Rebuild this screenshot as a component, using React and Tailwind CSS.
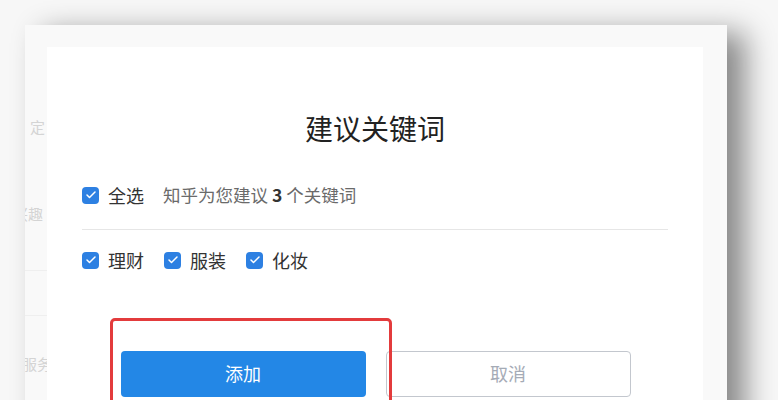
import { Check } from 'lucide-react';

const font = { fontFamily: '"Noto Sans CJK SC", "Noto Sans", sans-serif' };

function Box() {
  return (
    <span className="flex items-center justify-center w-[17px] h-[17px] rounded-[4px] bg-[#2d80e2] shrink-0">
      <Check size={12} strokeWidth={3} className="text-white" />
    </span>
  );
}

function Option({ label }) {
  return (
    <label className="flex items-center gap-[9px] text-[18px] leading-6 text-[#333]">
      <Box />
      <span>{label}</span>
    </label>
  );
}

export default function App() {
  return (
    <div className="w-[778px] h-[400px] overflow-hidden bg-[#f7f7f7] pt-[25px] pl-[25px]" style={font}>
      <div className="flex w-[702px] h-[420px] bg-[#f9f9f9] shadow-[18px_8px_28px_rgba(0,0,0,0.45)]">
        {/* page behind the dialog */}
        <div className="w-[22px] shrink-0 overflow-hidden flex flex-col text-[15px] text-[#d4d4d4] whitespace-nowrap">
          <div className="mt-[92px] h-5 leading-5 pl-[5px]">定</div>
          <div className="mt-[67px] h-5 leading-5 ml-[-12px]">兴趣</div>
          <div className="mt-[46px] border-t border-[#efefef]" />
          <div className="mt-[44px] border-t border-[#efefef]" />
          <div className="mt-[38px] h-5 leading-5 ml-[-3px]">服务</div>
        </div>

        {/* dialog */}
        <div className="relative flex-1 mt-[22px] bg-white px-[35px] pt-[63px]">
          <h2 className="text-center text-[28px] leading-9 text-[#222]">建议关键词</h2>

          <div className="mt-[37px] flex items-center">
            <Option label="全选" />
            <span className="ml-[19px] text-[17.5px] leading-6 text-[#6a6a6a]">
              知乎为您建议 <b className="font-bold text-[#333]">3</b> 个关键词
            </span>
          </div>

          <div className="mt-[22px] border-t border-[#e6e6e6]" />

          <div className="mt-[18px] flex items-center gap-5">
            <Option label="理财" />
            <Option label="服装" />
            <Option label="化妆" />
          </div>

          <div className="mt-[79px] flex justify-center gap-5 pl-px">
            <button className="w-[245px] h-[46px] rounded-[4px] bg-[#2387e6] text-white text-[18px] leading-none pb-[3px]">添加</button>
            <button className="w-[245px] h-[46px] rounded-[4px] border border-[#c3c7ce] bg-white text-[#a5abb6] text-[18px] leading-none pb-[3px]">取消</button>
          </div>

          {/* highlight */}
          <div className="absolute left-[63px] top-[271px] w-[282px] h-[110px] rounded-[5px] border-[3px] border-[#e33b3c]" />
        </div>

        <div className="w-6 shrink-0" />
      </div>
    </div>
  );
}
